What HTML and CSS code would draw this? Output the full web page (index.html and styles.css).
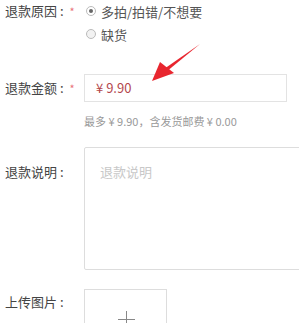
FILE: index.html
```html
<!DOCTYPE html>
<html lang="zh-CN">
<head>
    <meta charset="UTF-8">
    <title>申请退款</title>
    <link rel="stylesheet" href="styles.css">
</head>
<body>
    <form class="refund">
        <div class="row reason">
            <div class="label">退款原因 :<span class="req">*</span></div>
            <div class="field">
                <label class="radio checked"><span class="dot"></span>多拍/拍错/不想要</label>
                <label class="radio"><span class="dot"></span>缺货</label>
            </div>
        </div>

        <div class="row amount">
            <div class="label">退款金额 :<span class="req">*</span></div>
            <div class="field">
                <div class="input">¥ 9.90</div>
                <p class="hint">最多 ¥ 9.90，含发货邮费 ¥ 0.00</p>
            </div>
        </div>

        <div class="row desc">
            <div class="label">退款说明 :</div>
            <div class="field">
                <div class="textarea">退款说明</div>
            </div>
        </div>

        <div class="row upload">
            <div class="label">上传图片 :</div>
            <div class="field">
                <div class="upload-box"><span class="plus"></span></div>
            </div>
        </div>

        <!-- annotation arrow -->
        <svg class="arrow" width="60" height="50" viewBox="0 0 60 50">
            <path d="M50 2 L16 30 L14 27 Z" fill="#e8262f"/>
            <path d="M2 39 L10 20 L24 31 Z" fill="#e8262f"/>
        </svg>
    </form>
</body>
</html>
```

FILE: styles.css
```css
body {
    margin: 0;
    background: #fff;
    font-family: "Noto Sans CJK SC", "Noto Sans", sans-serif;
    font-size: 13px;
    color: #444;
}

.refund {
    position: relative;
    width: 299px;
    height: 323px;
    overflow: hidden;
}

.row {
    display: flex;
}

.label {
    width: 84px;
    flex-shrink: 0;
    padding-left: 5px;
    box-sizing: border-box;
    line-height: 22px;
    white-space: nowrap;
}

.req {
    color: #e9737a;
    font-size: 11px;
    margin-left: 6px;
}

.field {
    flex: 1;
}

.radio {
    display: flex;
    align-items: center;
    height: 22px;
    margin-bottom: 1px;
    margin-left: 2px;
    color: #555;
}

.dot {
    width: 8px;
    height: 8px;
    border: 1px solid #bbb;
    border-radius: 50%;
    background: #f2f2f2;
    margin-right: 5px;
    position: relative;
}

.radio.checked .dot {
    background: #fff;
}

.radio.checked .dot::after {
    content: "";
    position: absolute;
    left: 2px;
    top: 2px;
    width: 4px;
    height: 4px;
    border-radius: 50%;
    background: #666;
}

.amount {
    margin-top: 28px;
}

.amount .label {
    line-height: 28px;
}

.input {
    width: 203px;
    height: 28px;
    border: 1px solid #e3e3e3;
    box-sizing: border-box;
    padding-left: 11px;
    line-height: 26px;
    color: #b4474d;
    font-size: 13px;
}

.hint {
    margin: 11px 0 0;
    font-size: 11px;
    line-height: 16px;
    color: #999;
}

.desc {
    margin-top: 18px;
}

.desc .label {
    padding-top: 14px;
}

.textarea {
    width: 260px;
    height: 123px;
    border: 1px solid #ddd;
    border-radius: 2px;
    box-sizing: border-box;
    padding: 13px 15px;
    line-height: 22px;
    color: #c8c8c8;
}

.upload {
    margin-top: 19px;
}

.upload .label {
    padding-top: 2px;
}

.upload-box {
    width: 83px;
    height: 60px;
    border: 1px solid #ddd;
    box-sizing: border-box;
    position: relative;
}

.plus {
    position: absolute;
    left: 33px;
    top: 21px;
    width: 17px;
    height: 17px;
}

.plus::before,
.plus::after {
    content: "";
    position: absolute;
    background: #888;
}

.plus::before {
    left: 8px;
    top: 0;
    width: 1px;
    height: 17px;
}

.plus::after {
    left: 0;
    top: 8px;
    width: 17px;
    height: 1px;
}

.arrow {
    position: absolute;
    left: 150px;
    top: 42px;
}
```
